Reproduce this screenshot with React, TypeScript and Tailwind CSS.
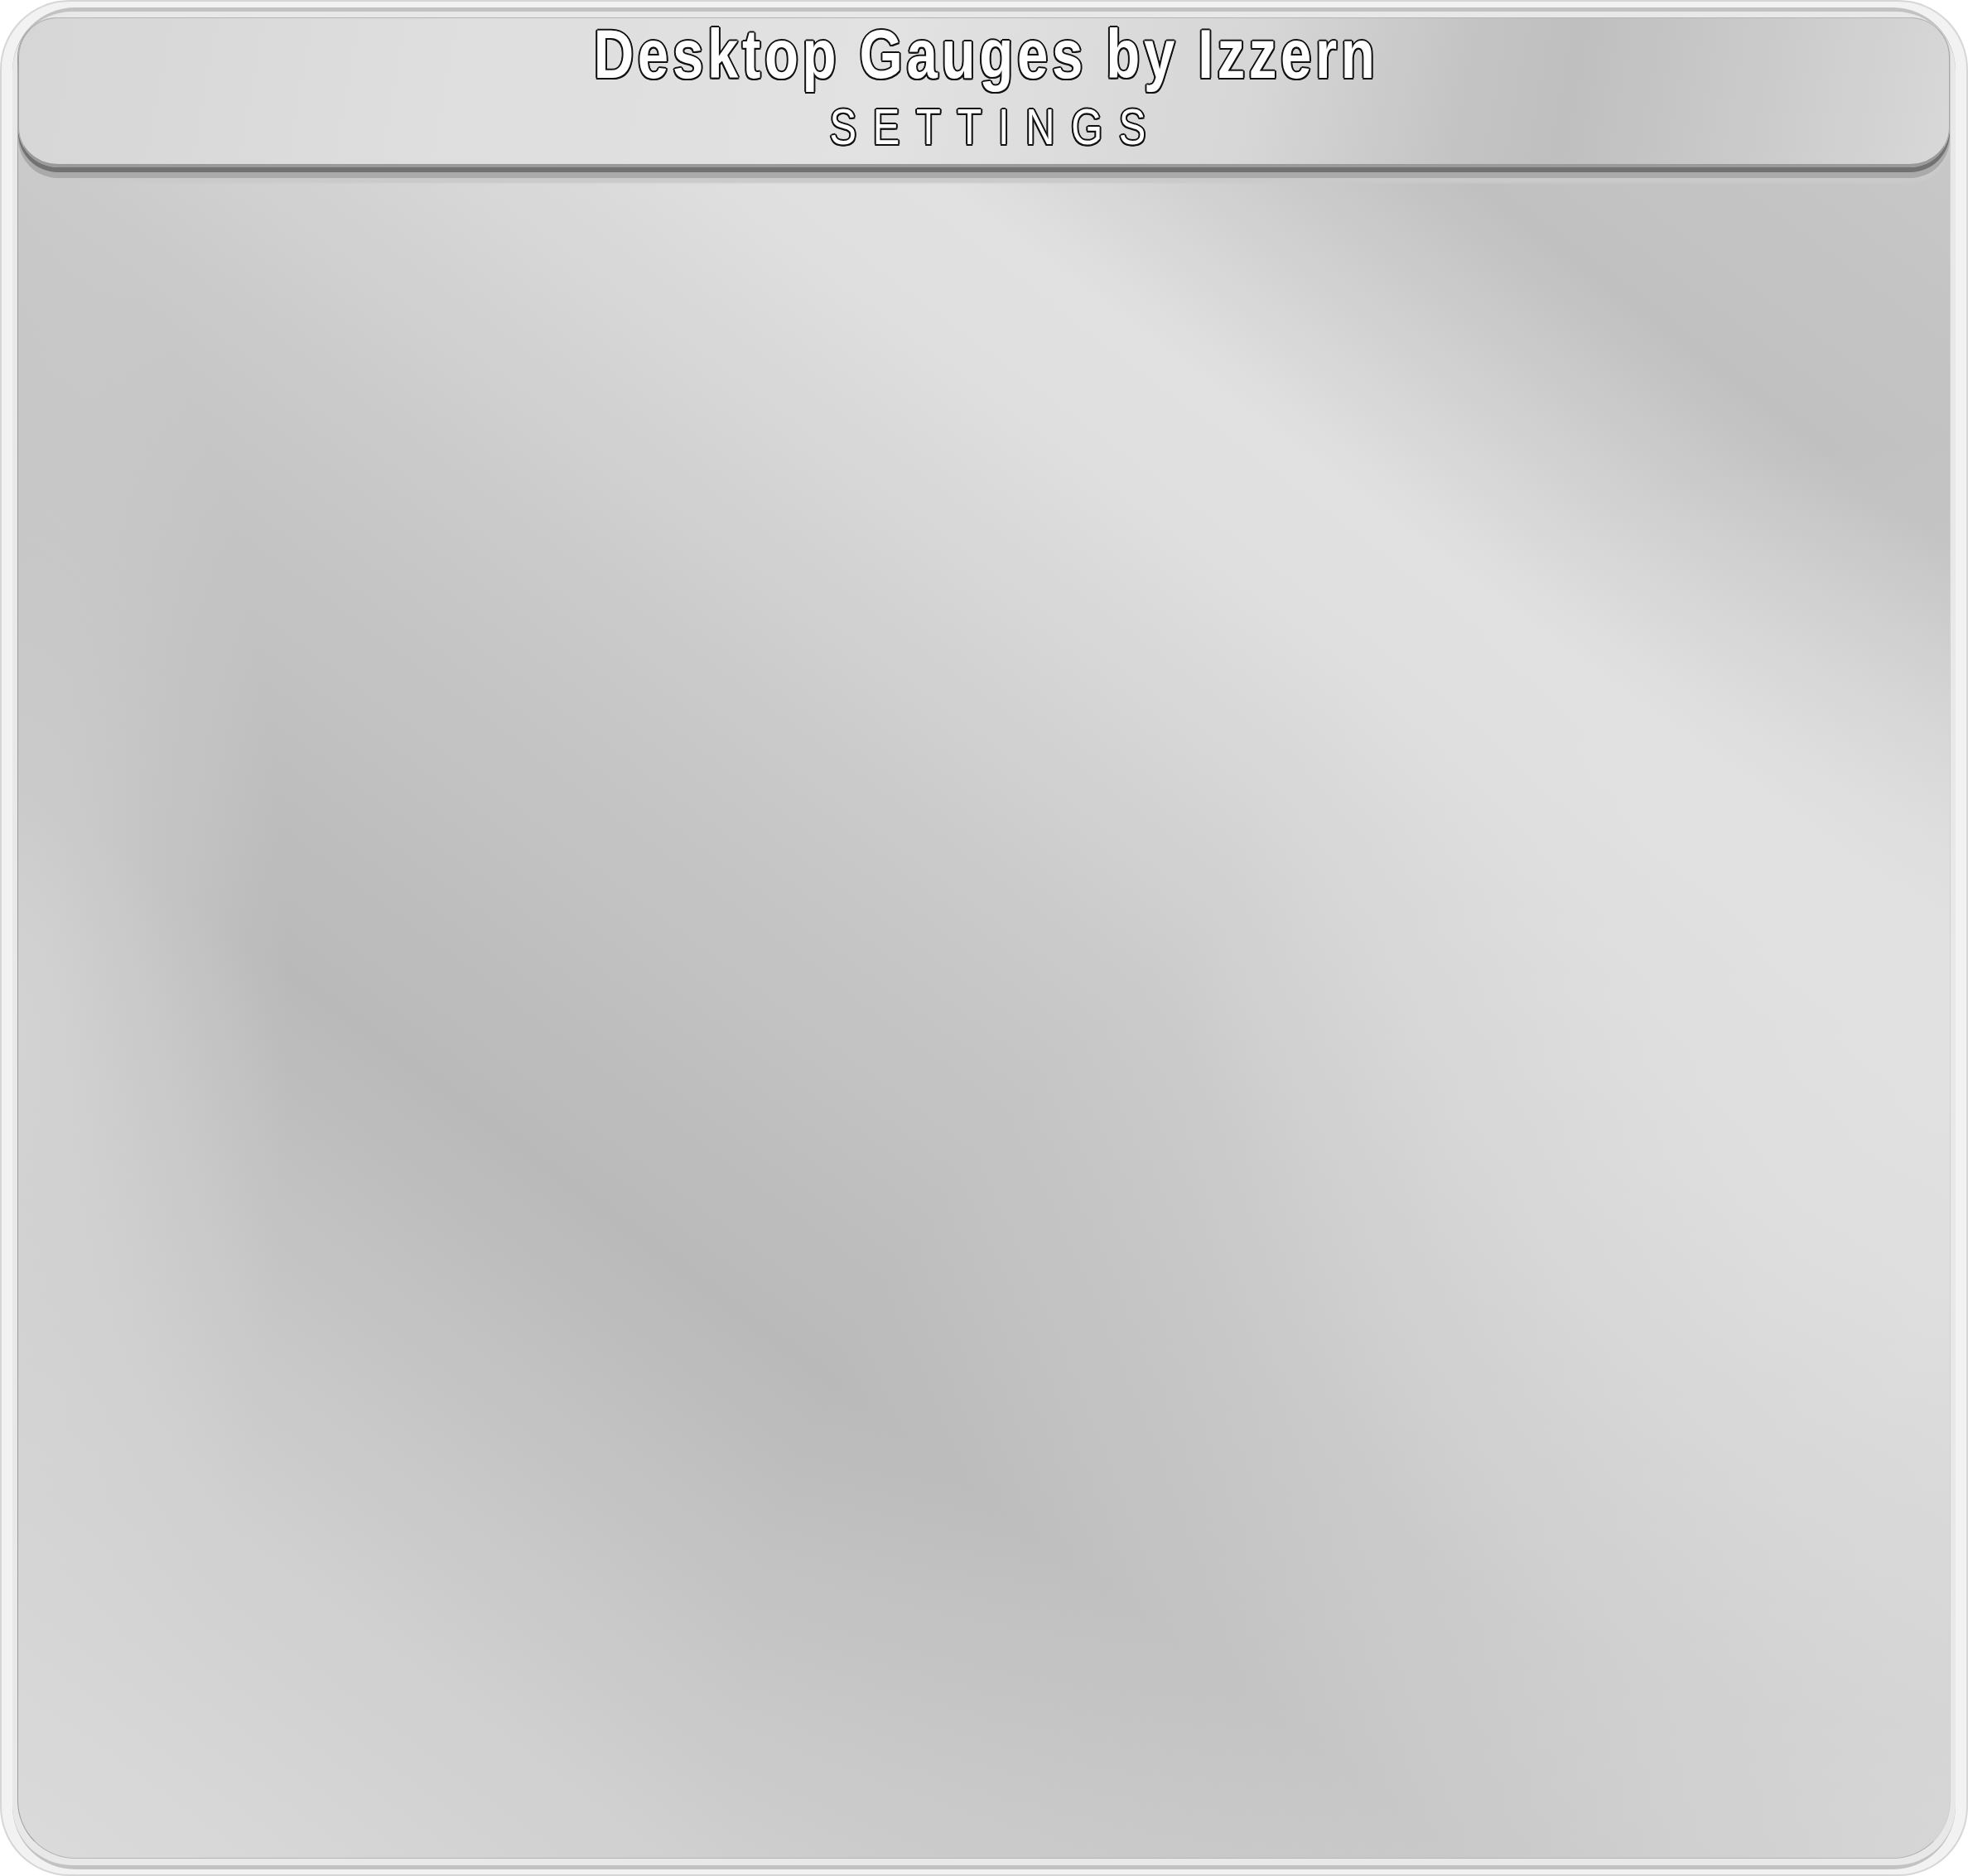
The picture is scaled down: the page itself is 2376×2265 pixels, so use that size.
import React from "react";

export default function App() {
  return (
    <div className="w-[2376px] h-[2265px] bg-white">
      <div className="w-full h-full rounded-[84px] bg-[#d6d6d6] p-[2px] flex">
        <div className="flex-1 flex rounded-[82px] bg-[#f2f2f2] pt-[7px] pb-[6px] px-[13px]">
          <div className="flex-1 flex rounded-[76px] bg-[#c2c2c2] pt-[5px] pb-[5px] px-0">
            <div className="flex-1 flex rounded-[72px] bg-[#e8e8e8] pt-[7px] pb-[8px] px-[6px]">
              <div className="flex-1 flex flex-col rounded-t-[48px] rounded-b-[70px] border-l border-r border-b border-l-[#9c9c9c] border-r-[#d0d0d0] border-b-[#b4b4b4] bg-[radial-gradient(ellipse_14%_45%_at_0%_55%,rgba(214,214,214,0.85),rgba(214,214,214,0)),radial-gradient(ellipse_40%_35%_at_100%_58%,rgba(226,226,226,0.8),rgba(226,226,226,0)),radial-gradient(ellipse_at_100%_100%,rgba(222,222,222,0.7),rgba(222,222,222,0)_45%),linear-gradient(37deg,#dbdbdb_0%,#d0d0d0_15%,#b9b9b9_33%,#c8c8c8_50%,#e0e0e0_68%,#e1e1e1_72%,#c0c0c0_84%,#cacaca_100%)]">
                <div className="h-[181px] rounded-[48px] border-t border-x border-b-[4px] border-t-[#b4b4b4] border-x-[#a8a8a8] border-b-[#9a9a9a] bg-[linear-gradient(100deg,#d6d6d6_0%,#dedede_22%,#e2e2e2_45%,#d6d6d6_64%,#c3c3c3_75%,#bfbfbf_80%,#cbcbcb_90%,#d8d8d8_100%)] shadow-[0_6px_0_#727272,0_13px_0_#aaaaaa,0_19px_2px_#cacaca] flex flex-col items-center pt-[1px]">
                  <div className="scale-x-[0.8] font-['Liberation_Sans',Arial,sans-serif] font-bold text-[84px] leading-[84px] tracking-[5.8px] pl-[5.8px] whitespace-nowrap text-white [text-shadow:2.5px_0_0_#111,-2.5px_0_0_#111,0_2px_0_#111,0_-2px_0_#111,1.8px_1.5px_0_#111,-1.8px_1.5px_0_#111,1.8px_-1.5px_0_#111,-1.8px_-1.5px_0_#111]">
                    Desktop Gauges by Izzern
                  </div>
                  <div className="mt-[16px] scale-x-[0.8] font-['Liberation_Sans',Arial,sans-serif] font-normal text-[61px] leading-[61px] tracking-[24.6px] pl-[36px] whitespace-nowrap text-white [text-shadow:2.5px_0_0_#111,-2.5px_0_0_#111,0_2px_0_#111,0_-2px_0_#111,1.8px_1.5px_0_#111,-1.8px_1.5px_0_#111,1.8px_-1.5px_0_#111,-1.8px_-1.5px_0_#111]">
                    SETTINGS
                  </div>
                </div>
                <div className="flex-1" />
              </div>
            </div>
          </div>
        </div>
      </div>
    </div>
  );
}
